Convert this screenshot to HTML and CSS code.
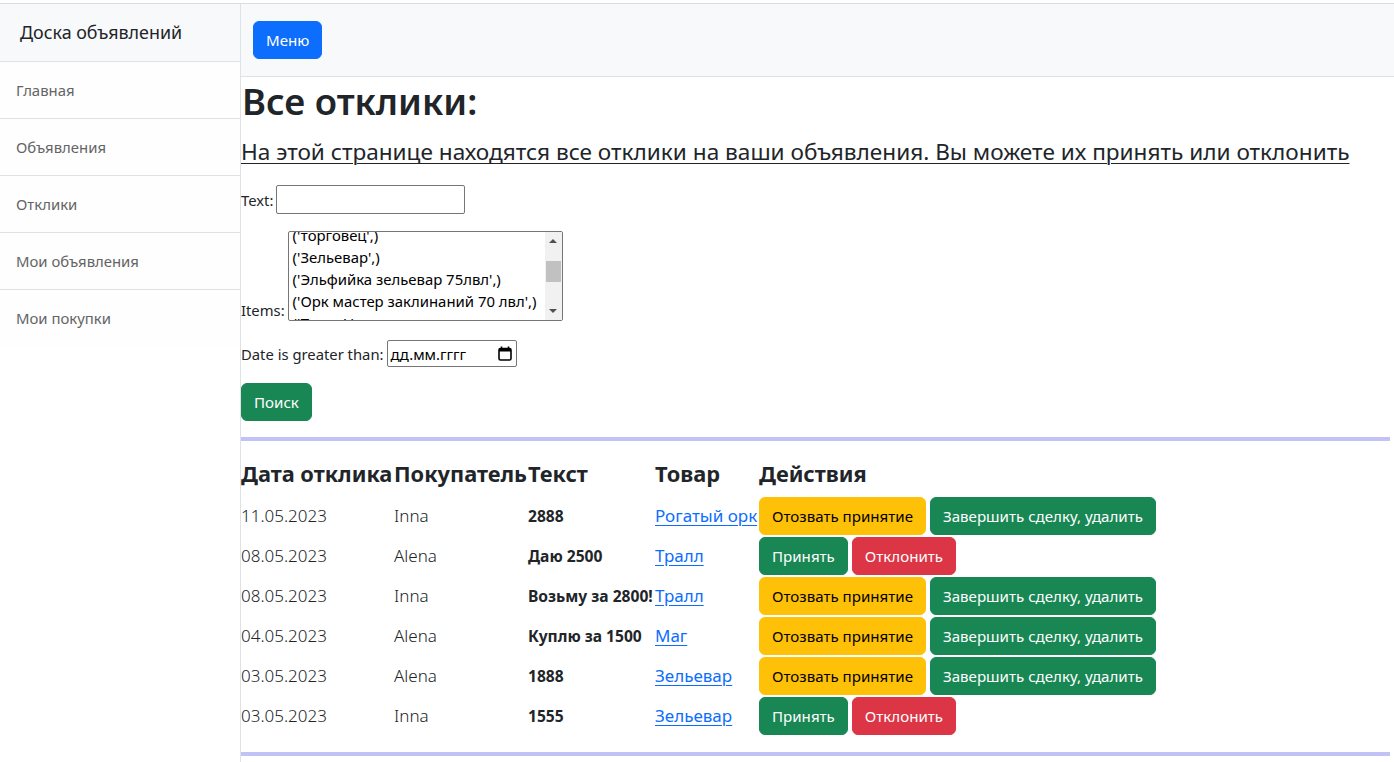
FILE: index.html
```html
<!DOCTYPE html>
<html lang="ru">
<head>
<meta charset="utf-8">
<title>Все отклики</title>
<link rel="stylesheet" href="styles.css">
</head>
<body>
<div class="wrapper">
  <aside class="sidebar">
    <div class="sidebar-heading">Доска объявлений</div>
    <nav class="list-group">
      <a class="list-item" href="#">Главная</a>
      <a class="list-item" href="#">Объявления</a>
      <a class="list-item" href="#">Отклики</a>
      <a class="list-item" href="#">Мои объявления</a>
      <a class="list-item" href="#">Мои покупки</a>
    </nav>
  </aside>
  <main class="page">
    <nav class="topbar">
      <button class="btn btn-primary" type="button">Меню</button>
    </nav>
    <div class="content">
      <h1 class="title">Все отклики:</h1>
      <p class="subtitle"><u>На этой странице находятся все отклики на ваши объявления. Вы можете их принять или отклонить</u></p>
      <form class="filter">
        <div class="row row-text">
          <label class="lbl" for="f-text">Text:</label>
          <input class="text-input" id="f-text" type="text">
        </div>
        <div class="row row-items">
          <span class="lbl lbl-items">Items:</span>
          <div class="listbox" role="listbox">
            <div class="listbox-view">
              <div class="listbox-options">
                <div class="opt">('торговец',)</div>
                <div class="opt">('Зельевар',)</div>
                <div class="opt">('Эльфийка зельевар 75лвл',)</div>
                <div class="opt">('Орк мастер заклинаний 70 лвл',)</div>
                <div class="opt">('Тралл',)</div>
              </div>
            </div>
            <div class="vscroll">
              <span class="arrow arrow-up"></span>
              <span class="thumb-track"><span class="thumb"></span></span>
              <span class="arrow arrow-down"></span>
            </div>
          </div>
        </div>
        <div class="row row-date">
          <span class="lbl">Date is greater than:</span>
          <div class="date-input">
            <span class="date-text">дд.мм.гггг</span>
            <svg class="cal" width="14" height="15" viewBox="0 0 14 15" aria-hidden="true">
              <path d="M3.5 0.5v2.5M10.5 0.5v2.5" stroke="#000" stroke-width="1.6" fill="none"/>
              <rect x="1" y="2.5" width="12" height="11.5" rx="1.5" fill="none" stroke="#000" stroke-width="1.6"/>
              <rect x="1" y="2.5" width="12" height="3" fill="#000"/>
            </svg>
          </div>
        </div>
        <div class="row row-submit">
          <button class="btn btn-success" type="button">Поиск</button>
        </div>
      </form>
      <hr class="sep">
      <table class="responses">
        <thead>
          <tr>
            <th class="c-date">Дата отклика</th>
            <th class="c-buyer">Покупатель</th>
            <th class="c-text">Текст</th>
            <th class="c-item">Товар</th>
            <th class="c-act">Действия</th>
          </tr>
        </thead>
        <tbody>
          <tr>
            <td class="soft">11.05.2023</td>
            <td class="soft">Inna</td>
            <td><b>2888</b></td>
            <td><a class="link" href="#">Рогатый орк</a></td>
            <td><button class="btn btn-warning" type="button">Отозвать принятие</button><button class="btn btn-success" type="button">Завершить сделку, удалить</button></td>
          </tr>
          <tr>
            <td class="soft">08.05.2023</td>
            <td class="soft">Alena</td>
            <td><b>Даю 2500</b></td>
            <td><a class="link" href="#">Тралл</a></td>
            <td><button class="btn btn-success" type="button">Принять</button><button class="btn btn-danger" type="button">Отклонить</button></td>
          </tr>
          <tr>
            <td class="soft">08.05.2023</td>
            <td class="soft">Inna</td>
            <td><b>Возьму за 2800!</b></td>
            <td><a class="link" href="#">Тралл</a></td>
            <td><button class="btn btn-warning" type="button">Отозвать принятие</button><button class="btn btn-success" type="button">Завершить сделку, удалить</button></td>
          </tr>
          <tr>
            <td class="soft">04.05.2023</td>
            <td class="soft">Alena</td>
            <td><b>Куплю за 1500</b></td>
            <td><a class="link" href="#">Маг</a></td>
            <td><button class="btn btn-warning" type="button">Отозвать принятие</button><button class="btn btn-success" type="button">Завершить сделку, удалить</button></td>
          </tr>
          <tr>
            <td class="soft">03.05.2023</td>
            <td class="soft">Alena</td>
            <td><b>1888</b></td>
            <td><a class="link" href="#">Зельевар</a></td>
            <td><button class="btn btn-warning" type="button">Отозвать принятие</button><button class="btn btn-success" type="button">Завершить сделку, удалить</button></td>
          </tr>
          <tr>
            <td class="soft">03.05.2023</td>
            <td class="soft">Inna</td>
            <td><b>1555</b></td>
            <td><a class="link" href="#">Зельевар</a></td>
            <td><button class="btn btn-success" type="button">Принять</button><button class="btn btn-danger" type="button">Отклонить</button></td>
          </tr>
        </tbody>
      </table>
      <hr class="sep sep-bottom">
    </div>
  </main>
</div>
</body>
</html>
```

FILE: styles.css
```css
* { box-sizing: border-box; }

html, body {
  margin: 0;
  padding: 0;
}

body {
  padding-top: 3px;
  font-family: "Noto Sans", "Open Sans", sans-serif;
  font-size: 15px;
  line-height: 24px;
  color: #212529;
  background: #fff;
  overflow: hidden;
}

.wrapper {
  display: flex;
  border-top: 1px solid #dcdcdc;
  min-height: 759px;
}

/* Sidebar */
.sidebar {
  width: 241px;
  flex: 0 0 241px;
  border-right: 1px solid #dee2e6;
  background: #fff;
}

.sidebar-heading {
  background: #f8f9fa;
  padding: 14px 20px;
  font-size: 17.9px;
  line-height: 28.8px;
  color: #212529;
  border-bottom: 1px solid #dee2e6;
}

.list-group {
  display: flex;
  flex-direction: column;
}

.list-item {
  display: block;
  padding: 16px;
  font-size: 14.9px;
  line-height: 24px;
  color: #636464;
  background: #fefefe;
  text-decoration: none;
  border-bottom: 1px solid #dee2e6;
}

.list-item:last-child { border-bottom: 0; }

/* Main */
.page {
  flex: 1 1 auto;
  min-width: 0;
}

.topbar {
  background: #f8f9fa;
  border-bottom: 1px solid #dee2e6;
  padding: 17px 12px;
  display: flex;
  align-items: center;
}

.btn {
  display: inline-block;
  font-family: inherit;
  font-size: 15.1px;
  line-height: 24px;
  padding: 6px 12px;
  border: 1px solid transparent;
  border-radius: 6px;
  cursor: pointer;
  vertical-align: middle;
  white-space: nowrap;
}

.btn-primary { background: #0d6efd; border-color: #0d6efd; color: #fff; }
.btn-success { background: #198754; border-color: #198754; color: #fff; }
.btn-warning { background: #ffc107; border-color: #ffc107; color: #000; }
.btn-danger  { background: #dc3545; border-color: #dc3545; color: #fff; }

.title {
  margin: 0 0 8px;
  padding-left: 1px;
  font-size: 36.5px;
  line-height: 48px;
  font-weight: 600;
}

.subtitle {
  margin: 9px 0 0;
  font-size: 22.6px;
  line-height: 36px;
}

.subtitle u {
  text-decoration-thickness: 1px;
  text-underline-offset: 3px;
}

/* Form */
.filter {
  display: flex;
  flex-direction: column;
  align-items: flex-start;
}

.row {
  display: flex;
  align-items: center;
}

.row-text { margin-top: 15px; }
.row-items { margin-top: 17px; align-items: flex-end; }
.row-date { margin-top: 19px; }
.row-submit { margin-top: 16px; }

.lbl {
  font-size: 14.8px;
  line-height: 24px;
  margin-right: 3px;
}

.lbl-items { margin-bottom: -1px; }

.text-input {
  width: 189px;
  height: 29px;
  border: 1px solid #767676;
  border-radius: 2px;
  padding: 1px 2px;
  font-family: inherit;
  font-size: 13.3px;
  margin: 0;
}

.listbox {
  width: 275px;
  height: 90px;
  border: 1px solid #767676;
  border-radius: 2px;
  display: flex;
  background: #fff;
  overflow: hidden;
}

.listbox-view {
  flex: 1 1 auto;
  overflow: hidden;
  padding-left: 4px;
}

.listbox-options {
  margin-top: -8px;
}

.opt {
  font-size: 14.9px;
  line-height: 22px;
  white-space: nowrap;
  color: #000;
}

.vscroll {
  flex: 0 0 17px;
  width: 17px;
  background: #f1f1f1;
  display: flex;
  flex-direction: column;
  align-items: center;
}

.arrow {
  width: 0;
  height: 0;
  border-left: 4px solid transparent;
  border-right: 4px solid transparent;
  display: block;
}

.arrow-up {
  border-bottom: 4px solid #505050;
  margin-top: 7px;
}

.arrow-down {
  border-top: 4px solid #505050;
  margin-bottom: 7px;
}

.thumb-track {
  flex: 1 1 auto;
  width: 100%;
  display: flex;
  justify-content: center;
  padding-top: 18px;
}

.thumb {
  display: block;
  width: 15px;
  height: 21px;
  background: #c1c1c1;
}

.date-input {
  width: 130px;
  height: 27px;
  border: 1px solid #767676;
  border-radius: 2px;
  display: flex;
  align-items: center;
  justify-content: space-between;
  padding: 0 4px 0 3px;
}

.date-text {
  font-size: 14.9px;
  line-height: 20px;
  color: #000;
}

.cal { display: block; }

/* Separators */
.sep {
  height: 4px;
  border: 0;
  background: #c2c2f7;
  margin: 16px 4px 0 0;
}

.sep-bottom { margin-top: 16px; }

/* Table */
.responses {
  border-collapse: collapse;
  margin-top: 13px;
}

.responses th {
  text-align: left;
  font-size: 21.8px;
  line-height: 40px;
  padding: 0 0 2px;
  font-weight: 700;
  white-space: nowrap;
  vertical-align: top;
}

.c-date { width: 153px; }
.c-buyer { width: 134px; }
.c-text { width: 127px; }
.c-item { width: 104px; }

.responses td {
  padding: 1px 0;
  white-space: nowrap;
  vertical-align: middle;
  font-size: 15px;
  line-height: 24px;
}

.responses td.soft {
  font-size: 17px;
  font-weight: 300;
  color: #212529;
}

.responses td b {
  font-weight: 700;
  font-size: 15.6px;
}

.link {
  font-size: 17px;
  color: #0d6efd;
  text-decoration: underline;
  text-underline-offset: 3px;
}

.responses td .btn + .btn { margin-left: 4px; }
```
